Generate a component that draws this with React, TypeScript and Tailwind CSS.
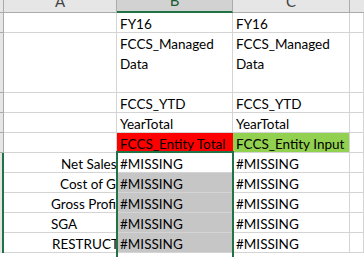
import React from "react";

const font = { fontFamily: "Lato, 'Open Sans', sans-serif" };

type Cell = { text?: string[]; cls?: string; pl?: string };

const grid = "border-r border-b border-[#d4d4d4]";

function DataCell({ text, cls = "", pl = "pl-[3px]" }: Cell) {
  return (
    <div className={`${grid} ${cls} ${pl} overflow-hidden whitespace-nowrap text-[13.5px] leading-[20px] text-black`}>
      {text?.map((t, i) => (
        <div key={i} className="h-[20px] pt-[1px]">
          {t}
        </div>
      ))}
    </div>
  );
}

function HeaderCell({ label, selected }: { label: string; selected?: boolean }) {
  return (
    <div
      className={`flex items-end justify-center overflow-hidden border-r border-[#ababab] text-[15px] leading-none ${
        selected ? "bg-[#d2d2d2] border-b-2 border-b-[#217346] text-[#1d5c36]" : "bg-[#e6e6e6] border-b border-b-[#ababab] text-[#444]"
      }`}
    >
      <span className="mb-[3px]">{label}</span>
    </div>
  );
}

function RowHead({ selected }: { selected?: boolean }) {
  return selected ? (
    <div className="bg-[#e6e6e6] border-r-2 border-[#217346]" />
  ) : (
    <div className="bg-[#e6e6e6] border-r border-b border-[#ababab]" />
  );
}

const labels: [string, string][] = [
  ["Net Sales", "pl-[57px]"],
  ["Cost of G", "pl-[56px]"],
  ["Gross Profi", "pl-[47px]"],
  ["SGA", "pl-[47px]"],
  ["RESTRUCT", "pl-[48px]"],
];

export default function App() {
  return (
    <div className="relative h-[257px] w-[364px] overflow-hidden bg-white" style={font}>
      <div className="grid grid-cols-[4px_113px_116px_117px_1fr] grid-rows-[13px_20px_60px_20px_20px_20px_20px_20px_20px_20px_20px_20px]">
        {/* column headers */}
        <div className="bg-[#e6e6e6] border-r border-b border-[#ababab]" />
        <HeaderCell label="A" />
        <HeaderCell label="B" selected />
        <HeaderCell label="C" />
        <div className="bg-[#e6e6e6] border-b border-[#ababab]" />

        {/* FY16 */}
        <RowHead />
        <DataCell />
        <DataCell text={["FY16"]} />
        <DataCell text={["FY16"]} />
        <DataCell />

        {/* FCCS_Managed Data */}
        <RowHead />
        <DataCell />
        <DataCell text={["FCCS_Managed", "Data"]} />
        <DataCell text={["FCCS_Managed", "Data"]} />
        <DataCell />

        {/* FCCS_YTD */}
        <RowHead />
        <DataCell />
        <DataCell text={["FCCS_YTD"]} />
        <DataCell text={["FCCS_YTD"]} />
        <DataCell />

        {/* YearTotal */}
        <RowHead />
        <DataCell />
        <DataCell text={["YearTotal"]} />
        <DataCell text={["YearTotal"]} />
        <DataCell />

        {/* entity members */}
        <RowHead />
        <DataCell />
        <DataCell text={["FCCS_Entity Total"]} cls="bg-[#ff0000] border-[#ff0000]" />
        <DataCell text={["FCCS_Entity Input"]} cls="bg-[#92d050] border-[#92d050]" />
        <DataCell />

        {/* accounts */}
        {labels.map(([label, pl], i) => (
          <React.Fragment key={label}>
            <RowHead selected />
            <DataCell text={[label]} pl={pl} />
            <DataCell text={["#MISSING"]} cls={i === 0 ? "" : "bg-[#c6c6c6] border-[#b8b8b8]"} />
            <DataCell text={["#MISSING"]} />
            <DataCell />
          </React.Fragment>
        ))}
      </div>

      {/* selection outline around B6:B11 */}
      <div className="pointer-events-none absolute left-[116px] top-[151px] h-[140px] w-[118px] border-2 border-[#217346]" />
    </div>
  );
}
